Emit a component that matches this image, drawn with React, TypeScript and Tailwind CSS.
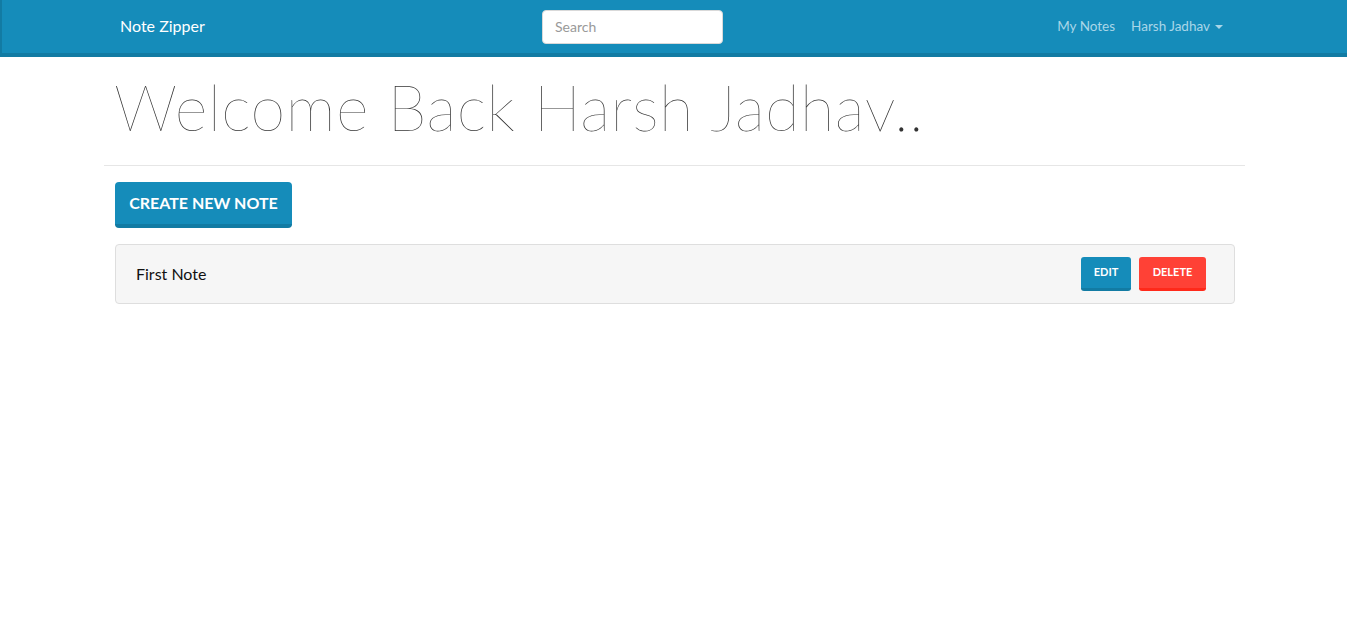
import React from "react";

const App: React.FC = () => {
    return (
        <div className="min-h-screen bg-white font-['Lato','Liberation_Sans',sans-serif] text-[#222]">
            <nav className="h-[57px] bg-[#158cba] border-b-4 border-[#127ba3] border-l-2 border-l-[#127ba3]">
                <div className="flex items-center h-full pl-[118px] pr-[124px]">
                    <span className="text-white text-[16px] w-[422px] -mt-[1px]">Note Zipper</span>
                    <input
                        placeholder="Search"
                        className="w-[181px] h-[34px] bg-white rounded-[4px] border border-[#d9d9d9] px-3 text-[14px] text-[#555] placeholder:text-[#999] outline-none"
                    />
                    <div className="flex items-center ml-auto gap-4 text-[13.5px] text-[#a9d6e8]">
                        <span>My Notes</span>
                        <span className="flex items-center gap-[5px]">
                            Harsh Jadhav
                            <span className="w-0 h-0 border-x-[4px] border-x-transparent border-t-[4px] border-t-[#a9d6e8]"></span>
                        </span>
                    </div>
                </div>
            </nav>
            <div className="px-[104px] w-[1349px]">
                <h1 className="pt-[16px] pb-[24px] pl-[10px] text-[63px] leading-[68px] font-extralight text-[#333] tracking-[0.5px] border-b border-[#e6e6e6]">
                    Welcome Back Harsh Jadhav..
                </h1>
                <div className="pl-[11px] pr-[10px]">
                    <button className="mt-[16px] w-[177px] h-[46px] bg-[#158cba] border-b-4 border-[#127ba3] rounded-[4px] text-white font-bold text-[16px] uppercase">
                        Create new note
                    </button>
                    <div className="mt-[16px] h-[60px] bg-[#f6f6f6] border border-[#dedede] rounded-[4px] flex items-center pl-5 pr-[28px]">
                        <span className="text-[16px] text-[#111]">First Note</span>
                        <div className="ml-auto flex gap-2">
                            <button className="w-[50px] h-[34px] bg-[#158cba] border-b-[3px] border-[#127ba3] rounded-[3px] text-white font-bold text-[11px] uppercase">
                                Edit
                            </button>
                            <button className="w-[67px] h-[34px] bg-[#ff4136] border-b-[3px] border-[#ff291a] rounded-[3px] text-white font-bold text-[11px] uppercase">
                                Delete
                            </button>
                        </div>
                    </div>
                </div>
            </div>
        </div>
    );
};

export default App;
